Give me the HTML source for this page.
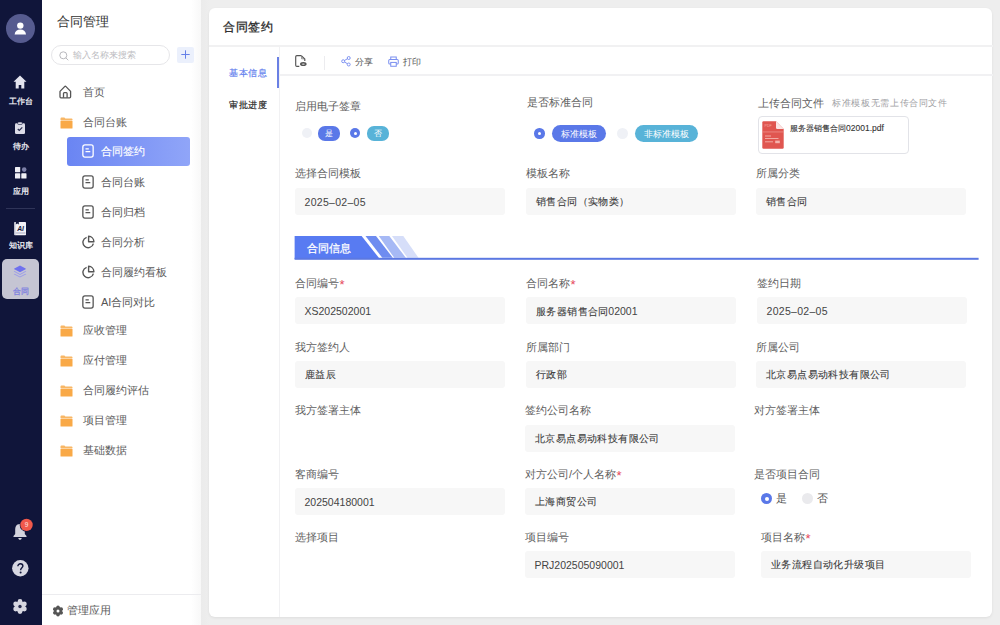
<!DOCTYPE html>
<html><head><meta charset="utf-8">
<style>
*{box-sizing:border-box;margin:0;padding:0}
html,body{width:1000px;height:625px;overflow:hidden}
body{position:relative;background:#eeeeee;font-family:"Liberation Sans",sans-serif;color:#333}
.a{position:absolute;white-space:nowrap}
.rail{position:absolute;left:0;top:0;width:41.5px;height:625px;background:#10153a;z-index:2}
.rt{position:absolute;left:0;width:41px;text-align:center;font-size:8px;line-height:8px;color:#f2f2f7;-webkit-text-stroke-width:.25px}
.side{position:absolute;left:41px;top:0;width:160px;height:625px;background:linear-gradient(90deg,#fff 0,#fff 150px,#f8f8f8 160px)}
.shade{position:absolute;left:200.5px;top:0;width:9px;height:625px;background:linear-gradient(90deg,#ebebeb,#eeeeee)}
.card{position:absolute;left:208.8px;top:7.7px;width:783.7px;height:609.2px;background:#fff;border-radius:6px;box-shadow:0 1px 3px rgba(0,0,0,.07)}
.nav{position:absolute;font-size:11px;line-height:11px;color:#5c5c5c}
.lbl{position:absolute;font-size:11px;line-height:11px;color:#606060}
.box{position:absolute;height:27px;background:#f7f7f7;-webkit-text-stroke:.1px #3a3a3a;border-radius:3px;font-size:10px;letter-spacing:.4px;line-height:28px;color:#3a3a3a;padding-left:10px;white-space:nowrap}
.n{font-size:10.5px;letter-spacing:0;margin-left:-.5px;-webkit-text-stroke:0;color:#444}
.req{color:#e5475c;font-size:13px;line-height:0;position:relative;top:2px;margin-left:.5px}
</style></head><body>
<div class="rail">
  <svg class="a" style="left:6px;top:14px" width="29" height="29" viewBox="0 0 29 29">
    <circle cx="14.5" cy="14.5" r="14.5" fill="#565b8f"/>
    <circle cx="14.3" cy="11.6" r="3.2" fill="#fff"/>
    <path d="M8.6 20.4 C8.9 17.3 11.3 15.6 14.3 15.6 C17.3 15.6 19.7 17.3 20 20.4 Z" fill="#fff"/>
  </svg>
  <svg class="a" style="left:13px;top:75px" width="14" height="14" viewBox="0 0 14 14">
    <path d="M7 0.5 L13.5 6.8 L11.3 6.8 L11.3 13.4 L8.3 13.4 L8.3 10 L5.7 10 L5.7 13.4 L2.7 13.4 L2.7 6.8 L0.5 6.8 Z" fill="#e4e4ee"/>
  </svg>
  <div class="rt" style="top:97.5px">工作台</div>
  <svg class="a" style="left:15.2px;top:121.5px" width="10" height="12" viewBox="0 0 10 12">
    <rect x="0" y="1.3" width="10" height="10.7" rx="1.3" fill="#dcdce8"/>
    <rect x="2.7" y="0" width="4.6" height="2.5" rx="0.9" fill="#dcdce8" stroke="#10153a" stroke-width="0.6"/>
    <path d="M2.8 7 L4.3 8.5 L7.3 5.4" stroke="#2a2e50" stroke-width="1.2" fill="none"/>
  </svg>
  <div class="rt" style="top:142.5px">待办</div>
  <svg class="a" style="left:14.5px;top:167px" width="12" height="12" viewBox="0 0 12 12">
    <rect x="0" y="0" width="5.2" height="5.2" rx="0.6" fill="#f0f0f6"/>
    <circle cx="9.2" cy="2.6" r="2.3" fill="#7d80a8"/>
    <rect x="0" y="6.3" width="5.2" height="5.2" rx="0.6" fill="#f0f0f6"/>
    <rect x="6.3" y="6.3" width="5.2" height="5.2" rx="0.6" fill="#f0f0f6"/>
  </svg>
  <div class="rt" style="top:188px">应用</div>
  <div class="a" style="left:6px;top:208px;width:29px;height:1px;background:#2f3458"></div>
  <svg class="a" style="left:14px;top:221.5px" width="12" height="14" viewBox="0 0 12 14">
    <rect x="0.2" y="0" width="11.8" height="13.3" rx="0.7" fill="#f2f2f7"/>
    <path d="M1.8 0 V2.4 L3.2 1.4 L4.8 2.4 V0 Z" fill="#10153a"/>
    <path d="M1 1.5 V13" stroke="#9a9cb5" stroke-width="0.5"/>
    <path d="M1.8 11 H11.5" stroke="#8a8ca8" stroke-width="0.7"/>
    <text x="6.6" y="9.3" font-size="6.8" font-weight="bold" font-style="italic" text-anchor="middle" fill="#141838" font-family="Liberation Sans">AI</text>
  </svg>
  <div class="rt" style="top:242px">知识库</div>
  <div class="a" style="left:2px;top:259px;width:37px;height:40px;border-radius:5px;background:#c5c5d3"></div>
  <svg class="a" style="left:13px;top:265px" width="14" height="13" viewBox="0 0 14 13">
    <path d="M7 0.6 L12.6 3.5 Q13.4 3.9 12.6 4.3 L7 7.2 L1.4 4.3 Q0.6 3.9 1.4 3.5 Z" fill="#6f71ee"/>
    <path d="M1.6 6.1 L7 8.9 L12.4 6.1 L13.3 6.6 L7 9.9 L0.7 6.6 Z" fill="#9b9ce8"/>
    <path d="M1.6 8.8 L7 11.6 L12.4 8.8 L13.3 9.3 L7 12.6 L0.7 9.3 Z" fill="#9b9ce8"/>
  </svg>
  <div class="rt" style="top:288px;color:#7c7ee0">合同</div>
  <svg class="a" style="left:12px;top:517px" width="22" height="24" viewBox="0 0 22 24">
    <path d="M8 7 C4 7 3.2 10 3.2 13 V17 L1.5 19 V20 H14.5 V19 L12.8 17 V13 C12.8 10 12 7 8 7 Z" fill="#d3d3dd"/>
    <path d="M6.3 21 H9.7 C9.7 22.2 8.9 22.8 8 22.8 C7.1 22.8 6.3 22.2 6.3 21 Z" fill="#d3d3dd"/>
    <circle cx="14.5" cy="7.9" r="6.8" fill="#10153a"/>
    <circle cx="14.5" cy="7.9" r="6.2" fill="#f1594b"/>
    <text x="14.5" y="10.2" font-size="6.5" text-anchor="middle" fill="#fde8e4" font-family="Liberation Sans">9</text>
  </svg>
  <svg class="a" style="left:11.7px;top:560.3px" width="17" height="17" viewBox="0 0 17 17">
    <circle cx="8.3" cy="8.3" r="8.2" fill="#d7d7e1"/>
    <path d="M5.9 6.3 C5.9 4.7 7 3.8 8.4 3.8 C9.9 3.8 10.9 4.7 10.9 6 C10.9 7.7 8.6 8 8.6 10.3" stroke="#10153a" stroke-width="1.4" fill="none"/>
    <circle cx="8.6" cy="12.6" r="1" fill="#10153a"/>
  </svg>
  <svg class="a" style="left:12px;top:599px" width="16" height="15" viewBox="0 0 16 15">
    <g fill="#d7d7e1"><circle cx="8" cy="7.5" r="5.3"/><circle cx="8.00" cy="2.50" r="2.4"/><circle cx="12.33" cy="5.00" r="2.4"/><circle cx="12.33" cy="10.00" r="2.4"/><circle cx="8.00" cy="12.50" r="2.4"/><circle cx="3.67" cy="10.00" r="2.4"/><circle cx="3.67" cy="5.00" r="2.4"/></g>
    <circle cx="8" cy="7.5" r="1.7" fill="#2a2e50"/>
  </svg>
</div>

<div class="side">
  <div class="a" style="left:16px;top:15px;font-size:13px;line-height:14px;color:#333">合同管理</div>
  <div class="a" style="left:10px;top:44.5px;width:119px;height:20.5px;border:1px solid #e6e6e9;border-radius:11px"></div>
  <svg class="a" style="left:18px;top:50.5px" width="10" height="10" viewBox="0 0 10 10">
    <circle cx="4.3" cy="4.3" r="3.5" stroke="#b8b8bd" stroke-width="1" fill="none"/>
    <path d="M6.8 6.8 L9.3 9.3" stroke="#b8b8bd" stroke-width="1" fill="none"/>
  </svg>
  <div class="a" style="left:32px;top:50px;font-size:9px;line-height:10px;color:#bdbdc2">输入名称来搜索</div>
  <div class="a" style="left:136px;top:46.5px;width:16.5px;height:16.5px;border-radius:2px;background:#ebf0fc"></div>
  <svg class="a" style="left:139px;top:49px" width="11" height="11" viewBox="0 0 11 11">
    <path d="M5.5 1.3 V9.7 M1.3 5.5 H9.7" stroke="#6580e8" stroke-width="1" fill="none"/>
  </svg>

  <svg class="a" style="left:18px;top:85px" width="13" height="14" viewBox="0 0 13 14">
    <path d="M1 6.4 L5.6 1.6 Q6.3 0.9 7 1.6 L11.6 6.4 V11.8 C11.6 12.5 11.2 12.8 10.6 12.8 H2 C1.4 12.8 1 12.5 1 11.8 Z" stroke="#555" stroke-width="1.3" fill="none" stroke-linejoin="round"/>
    <path d="M4.5 12.8 V8.5 C4.5 8 4.8 7.6 5.3 7.6 H7.3 C7.8 7.6 8.1 8 8.1 8.5 V12.8" stroke="#555" stroke-width="1.3" fill="none"/>
  </svg>
  <div class="nav" style="left:42px;top:87px">首页</div>
  <svg class="a" style="left:19px;top:117px" width="13" height="12" viewBox="0 0 13 12">
    <path d="M0.5 1.4 C0.5 0.9 0.9 0.5 1.4 0.5 H4.4 L5.4 1.4 H11.6 C12.1 1.4 12.5 1.8 12.5 2.3 V2.9 H0.5 Z" fill="#f8b766"/>
    <rect x="0.5" y="3.5" width="12" height="8" rx="0.6" fill="#f9a947"/>
  </svg>
  <div class="nav" style="left:42px;top:117px">合同台账</div>
  <div class="a" style="left:26px;top:137.4px;width:123px;height:28.2px;border-radius:3px;background:linear-gradient(90deg,#6a85f3,#90a5f8)"></div>
  <svg class="a" style="left:41px;top:144px" width="13" height="14" viewBox="0 0 13 14">
    <rect x="0.85" y="0.9" width="10.3" height="12.2" rx="2" stroke="#fff" stroke-width="1.3" fill="none"/>
    <path d="M3.5 4.8 H6.8 M3.5 7.6 H8.3" stroke="#fff" stroke-width="1.3"/>
  </svg>
  <div class="nav" style="left:60px;top:146px;color:#fff;-webkit-text-stroke:.15px #fff">合同签约</div>
  <svg class="a" style="left:41px;top:175px" width="13" height="14" viewBox="0 0 13 14">
    <rect x="0.85" y="0.9" width="10.3" height="12.2" rx="2" stroke="#555" stroke-width="1.3" fill="none"/>
    <path d="M3.5 4.8 H6.8 M3.5 7.6 H8.3" stroke="#555" stroke-width="1.3"/>
  </svg>
  <div class="nav" style="left:60px;top:177px;color:#555">合同台账</div>
  <svg class="a" style="left:41px;top:205px" width="13" height="14" viewBox="0 0 13 14">
    <rect x="0.85" y="0.9" width="10.3" height="12.2" rx="2" stroke="#555" stroke-width="1.3" fill="none"/>
    <path d="M3.5 4.8 H6.8 M3.5 7.6 H8.3" stroke="#555" stroke-width="1.3"/>
  </svg>
  <div class="nav" style="left:60px;top:207px;color:#555">合同归档</div>
  <svg class="a" style="left:41px;top:235px" width="14" height="14" viewBox="0 0 14 14">
    <path d="M4.6 2.3 A5.3 5.3 0 1 0 11.4 8.6" stroke="#555" stroke-width="1.4" fill="none"/>
    <path d="M6.6 1.3 V6.7 H11.9 A5.5 5.5 0 0 0 6.6 1.3 Z" stroke="#555" stroke-width="1.4" fill="none" stroke-linejoin="round"/>
  </svg>
  <div class="nav" style="left:60px;top:237px">合同分析</div>
  <svg class="a" style="left:41px;top:265px" width="14" height="14" viewBox="0 0 14 14">
    <path d="M4.6 2.3 A5.3 5.3 0 1 0 11.4 8.6" stroke="#555" stroke-width="1.4" fill="none"/>
    <path d="M6.6 1.3 V6.7 H11.9 A5.5 5.5 0 0 0 6.6 1.3 Z" stroke="#555" stroke-width="1.4" fill="none" stroke-linejoin="round"/>
  </svg>
  <div class="nav" style="left:60px;top:267px">合同履约看板</div>
  <svg class="a" style="left:41px;top:295px" width="13" height="14" viewBox="0 0 13 14">
    <rect x="0.85" y="0.9" width="10.3" height="12.2" rx="2" stroke="#555" stroke-width="1.3" fill="none"/>
    <path d="M3.5 4.8 H6.8 M3.5 7.6 H8.3" stroke="#555" stroke-width="1.3"/>
  </svg>
  <div class="nav" style="left:60px;top:297px;color:#555">AI合同对比</div>
  <svg class="a" style="left:19px;top:325px" width="13" height="12" viewBox="0 0 13 12">
    <path d="M0.5 1.4 C0.5 0.9 0.9 0.5 1.4 0.5 H4.4 L5.4 1.4 H11.6 C12.1 1.4 12.5 1.8 12.5 2.3 V2.9 H0.5 Z" fill="#f8b766"/>
    <rect x="0.5" y="3.5" width="12" height="8" rx="0.6" fill="#f9a947"/>
  </svg>
  <div class="nav" style="left:42px;top:325px">应收管理</div>
  <svg class="a" style="left:19px;top:355px" width="13" height="12" viewBox="0 0 13 12">
    <path d="M0.5 1.4 C0.5 0.9 0.9 0.5 1.4 0.5 H4.4 L5.4 1.4 H11.6 C12.1 1.4 12.5 1.8 12.5 2.3 V2.9 H0.5 Z" fill="#f8b766"/>
    <rect x="0.5" y="3.5" width="12" height="8" rx="0.6" fill="#f9a947"/>
  </svg>
  <div class="nav" style="left:42px;top:355px">应付管理</div>
  <svg class="a" style="left:19px;top:385px" width="13" height="12" viewBox="0 0 13 12">
    <path d="M0.5 1.4 C0.5 0.9 0.9 0.5 1.4 0.5 H4.4 L5.4 1.4 H11.6 C12.1 1.4 12.5 1.8 12.5 2.3 V2.9 H0.5 Z" fill="#f8b766"/>
    <rect x="0.5" y="3.5" width="12" height="8" rx="0.6" fill="#f9a947"/>
  </svg>
  <div class="nav" style="left:42px;top:385px">合同履约评估</div>
  <svg class="a" style="left:19px;top:415px" width="13" height="12" viewBox="0 0 13 12">
    <path d="M0.5 1.4 C0.5 0.9 0.9 0.5 1.4 0.5 H4.4 L5.4 1.4 H11.6 C12.1 1.4 12.5 1.8 12.5 2.3 V2.9 H0.5 Z" fill="#f8b766"/>
    <rect x="0.5" y="3.5" width="12" height="8" rx="0.6" fill="#f9a947"/>
  </svg>
  <div class="nav" style="left:42px;top:415px">项目管理</div>
  <svg class="a" style="left:19px;top:445px" width="13" height="12" viewBox="0 0 13 12">
    <path d="M0.5 1.4 C0.5 0.9 0.9 0.5 1.4 0.5 H4.4 L5.4 1.4 H11.6 C12.1 1.4 12.5 1.8 12.5 2.3 V2.9 H0.5 Z" fill="#f8b766"/>
    <rect x="0.5" y="3.5" width="12" height="8" rx="0.6" fill="#f9a947"/>
  </svg>
  <div class="nav" style="left:42px;top:445px">基础数据</div>

  <div class="a" style="left:0;top:594px;width:160px;height:1px;background:#ececef"></div>
  <svg class="a" style="left:10.5px;top:605px" width="12" height="12" viewBox="0 0 12 12">
    <g fill="#555"><circle cx="6" cy="6" r="3.9"/><circle cx="6.00" cy="2.30" r="1.8"/><circle cx="9.20" cy="4.15" r="1.8"/><circle cx="9.20" cy="7.85" r="1.8"/><circle cx="6.00" cy="9.70" r="1.8"/><circle cx="2.80" cy="7.85" r="1.8"/><circle cx="2.80" cy="4.15" r="1.8"/></g>
    <circle cx="6" cy="6" r="1.5" fill="#fff"/>
  </svg>
  <div class="nav" style="left:26px;top:605px">管理应用</div>
</div>
<div class="shade"></div>
<div class="card"></div>
<div class="a" style="left:209px;top:45.3px;width:783.5px;height:1.6px;background:#f1f1f2"></div>
<div class="a" style="left:223px;top:19.7px;font-size:12px;line-height:14px;letter-spacing:.5px;color:#2a2a2a;-webkit-text-stroke:.3px #2a2a2a">合同签约</div>
<div class="a" style="left:278.8px;top:46.9px;width:1.7px;height:570px;background:#f1f1f3"></div>
<div class="a" style="left:277px;top:57px;width:2px;height:31px;background:#6a80e4"></div>
<div class="a" style="left:229px;top:67.5px;font-size:9px;line-height:11px;letter-spacing:.7px;color:#6481ee;-webkit-text-stroke:.2px #6481ee">基本信息</div>
<div class="a" style="left:229px;top:99.5px;font-size:9px;line-height:11px;letter-spacing:.7px;color:#2a2a2a;-webkit-text-stroke:.2px #2a2a2a">审批进度</div>
<div class="a" style="left:280px;top:74.2px;width:712.5px;height:1.6px;background:#f1f1f3"></div>
<svg class="a" style="left:295px;top:55px" width="12" height="12" viewBox="0 0 12 12">
  <path d="M6.3 0.6 H1.9 Q0.7 0.6 0.7 1.8 V10.3 Q0.7 11.4 1.9 11.4 H4.3" stroke="#555" stroke-width="1.15" fill="none"/>
  <path d="M6.3 0.6 L9.8 4.1 V6" stroke="#555" stroke-width="1.15" fill="none"/>
  <path d="M6.6 1.2 V3.8 H9.3" stroke="#777" stroke-width="0.8" fill="none"/>
  <ellipse cx="8.3" cy="9.1" rx="3.3" ry="2" fill="#555"/>
  <ellipse cx="8.3" cy="9.1" rx="1.6" ry="0.7" fill="#ddd"/>
</svg>
<div class="a" style="left:324px;top:56px;width:1px;height:14px;background:#ececef"></div>
<svg class="a" style="left:340.5px;top:56px" width="10" height="10.5" viewBox="0 0 11 12">
  <circle cx="8.6" cy="2.3" r="1.7" stroke="#7a8ff0" stroke-width="1.1" fill="none"/>
  <circle cx="2.3" cy="6" r="1.7" stroke="#7a8ff0" stroke-width="1.1" fill="none"/>
  <circle cx="8.6" cy="9.7" r="1.7" stroke="#7a8ff0" stroke-width="1.1" fill="none"/>
  <path d="M3.8 5.1 L7.1 3.2 M3.8 6.9 L7.1 8.8" stroke="#7a8ff0" stroke-width="1.1"/>
</svg>
<div class="a" style="left:354.5px;top:56.5px;font-size:9px;line-height:10px;letter-spacing:.2px;color:#555">分享</div>
<svg class="a" style="left:388px;top:56px" width="11" height="11" viewBox="0 0 12 12">
  <path d="M3 3.8 V1 H9 V3.8" stroke="#7a8ff0" stroke-width="1.1" fill="none"/>
  <rect x="0.8" y="3.8" width="10.4" height="5" rx="1.2" stroke="#7a8ff0" stroke-width="1.1" fill="none"/>
  <rect x="3" y="7" width="6" height="4.2" stroke="#7a8ff0" stroke-width="1.1" fill="#fff"/>
</svg>
<div class="a" style="left:402.5px;top:56.5px;font-size:9px;line-height:10px;letter-spacing:.2px;color:#555">打印</div>

<div class="lbl" style="left:295px;top:101px">启用电子签章</div>
<div class="a" style="left:302px;top:128px;width:10px;height:10px;border-radius:50%;background:#eff1f6"></div>
<div class="a" style="left:318px;top:126px;width:22px;height:14.5px;border-radius:7px;background:#5a78e8;color:#fff;font-size:8px;line-height:15.5px;text-align:center">是</div>
<div class="a" style="left:350px;top:128px;width:10px;height:10px;border-radius:50%;background:#5a78e8"></div>
<div class="a" style="left:353.5px;top:131.5px;width:3px;height:3px;border-radius:50%;background:#fff"></div>
<div class="a" style="left:366.5px;top:126px;width:22px;height:14.5px;border-radius:7px;background:#58b3d8;color:#fff;font-size:8px;line-height:15.5px;text-align:center">否</div>

<div class="lbl" style="left:527px;top:97px">是否标准合同</div>
<div class="a" style="left:534.3px;top:128px;width:10.5px;height:10.5px;border-radius:50%;background:#5a78e8"></div>
<div class="a" style="left:538.05px;top:131.75px;width:3px;height:3px;border-radius:50%;background:#fff"></div>
<div class="a" style="left:552px;top:125px;width:54px;height:17px;border-radius:8.5px;background:#5a78e8;color:#fff;font-size:9px;line-height:18.5px;text-align:center">标准模板</div>
<div class="a" style="left:617px;top:128px;width:11px;height:11px;border-radius:50%;background:#eff1f6"></div>
<div class="a" style="left:635px;top:125px;width:63px;height:17px;border-radius:8.5px;background:#58b3d8;color:#fff;font-size:9px;line-height:18.5px;text-align:center">非标准模板</div>

<div class="lbl" style="left:758px;top:97.5px">上传合同文件</div>
<div class="a" style="left:832px;top:98px;font-size:9px;line-height:11px;letter-spacing:.65px;color:#a0a0a4">标准模板无需上传合同文件</div>
<div class="a" style="left:758px;top:116px;width:151px;height:37.5px;border:1px solid #e2e3e8;border-radius:4px"></div>
<svg class="a" style="left:762px;top:120.5px" width="22" height="28" viewBox="0 0 22 28">
  <path d="M0.3 1.5 Q0.3 0.3 1.5 0.3 H14 L21.7 8 V26.5 Q21.7 27.7 20.5 27.7 H1.5 Q0.3 27.7 0.3 26.5 Z" fill="#e05650"/>
  <path d="M14 0.3 V6.8 Q14 8 15.2 8 H21.7 Z" fill="#fbe6e4"/>
  <rect x="0.3" y="10.6" width="21.4" height="0.7" fill="#f19a93"/>
  <text x="2.6" y="6.4" font-size="3.6" fill="#f3aaa4" font-family="Liberation Sans">PDF</text>
  <path d="M3 15 H9 M3 17.5 H16.5 M3 20.8 H11" stroke="#f4b3ad" stroke-width="0.9"/>
  <rect x="13.2" y="19.6" width="4.6" height="2.6" fill="#f4b3ad"/>
</svg>
<div class="a" style="left:790px;top:122.5px;font-size:8px;line-height:10px;color:#333;-webkit-text-stroke:.1px #333">服务器销售合同<span style="font-size:8.5px">02001.pdf</span></div>

<div class="lbl" style="left:295px;top:168px">选择合同模板</div>
<div class="box" style="left:295px;top:188px;width:210px"><span class="n" style="letter-spacing:.3px">2025–02–05</span></div>
<div class="lbl" style="left:526px;top:168px">模板名称</div>
<div class="box" style="left:526px;top:188px;width:210px">销售合同（实物类）</div>
<div class="lbl" style="left:756px;top:168px">所属分类</div>
<div class="box" style="left:756px;top:188px;width:210px">销售合同</div>

<svg class="a" style="left:294px;top:236px" width="685" height="24" viewBox="0 0 685 24">
  <path d="M0.6 0 H67.6 L85.8 23 H0.6 Z" fill="#587bf2"/>
  <path d="M71.5 0 H82 L98.8 21.8 H88.3 Z" fill="#6e8cf0"/>
  <path d="M84.8 0 H95.3 L111.8 21.8 H100.2 Z" fill="#a6b9f5"/>
  <path d="M98 0 H109.3 L124.5 21.8 H113.5 Z" fill="#d6def9"/>
  <rect x="0.6" y="21.8" width="684" height="2" fill="#5b78e2"/>
</svg>
<div class="a" style="left:307px;top:243px;font-size:11px;line-height:11px;color:#fff;-webkit-text-stroke:.25px #fff">合同信息</div>

<div class="lbl" style="left:295px;top:278px">合同编号<span class="req">*</span></div>
<div class="box" style="left:295px;top:297px;width:210px"><span class="n">XS202502001</span></div>
<div class="lbl" style="left:526px;top:278px">合同名称<span class="req">*</span></div>
<div class="box" style="left:526px;top:297px;width:210px">服务器销售合同<span class="n">02001</span></div>
<div class="lbl" style="left:757px;top:278px">签约日期</div>
<div class="box" style="left:757px;top:297px;width:210px"><span class="n" style="letter-spacing:.3px">2025–02–05</span></div>
<div class="lbl" style="left:295px;top:342px">我方签约人</div>
<div class="box" style="left:295px;top:361px;width:210px">鹿益辰</div>
<div class="lbl" style="left:526px;top:342px">所属部门</div>
<div class="box" style="left:526px;top:361px;width:210px">行政部</div>
<div class="lbl" style="left:756px;top:342px">所属公司</div>
<div class="box" style="left:756px;top:361px;width:210px">北京易点易动科技有限公司</div>
<div class="lbl" style="left:295px;top:405px">我方签署主体</div>
<div class="lbl" style="left:525px;top:405px">签约公司名称</div>
<div class="box" style="left:525px;top:425px;width:210px">北京易点易动科技有限公司</div>
<div class="lbl" style="left:754px;top:405px">对方签署主体</div>
<div class="lbl" style="left:295px;top:469px">客商编号</div>
<div class="box" style="left:295px;top:488px;width:210px"><span class="n">202504180001</span></div>
<div class="lbl" style="left:525px;top:469px">对方公司/个人名称<span class="req">*</span></div>
<div class="box" style="left:525px;top:488px;width:210px">上海商贸公司</div>
<div class="lbl" style="left:754px;top:469px">是否项目合同</div>
<div class="lbl" style="left:295px;top:532px">选择项目</div>
<div class="lbl" style="left:525px;top:532px">项目编号</div>
<div class="box" style="left:525px;top:551px;width:210px"><span class="n">PRJ202505090001</span></div>
<div class="lbl" style="left:761px;top:532px">项目名称<span class="req">*</span></div>
<div class="box" style="left:761px;top:551px;width:210px">业务流程自动化升级项目</div>

<div class="a" style="left:761px;top:493px;width:11px;height:11px;border-radius:50%;background:#5a78e8"></div>
<div class="a" style="left:764.5px;top:496.5px;width:4px;height:4px;border-radius:50%;background:#fff"></div>
<div class="a" style="left:776px;top:493px;font-size:11px;line-height:11px;color:#555">是</div>
<div class="a" style="left:801.5px;top:493px;width:11px;height:11px;border-radius:50%;background:#eaeaed"></div>
<div class="a" style="left:817px;top:493px;font-size:11px;line-height:11px;color:#555">否</div>

</body></html>
